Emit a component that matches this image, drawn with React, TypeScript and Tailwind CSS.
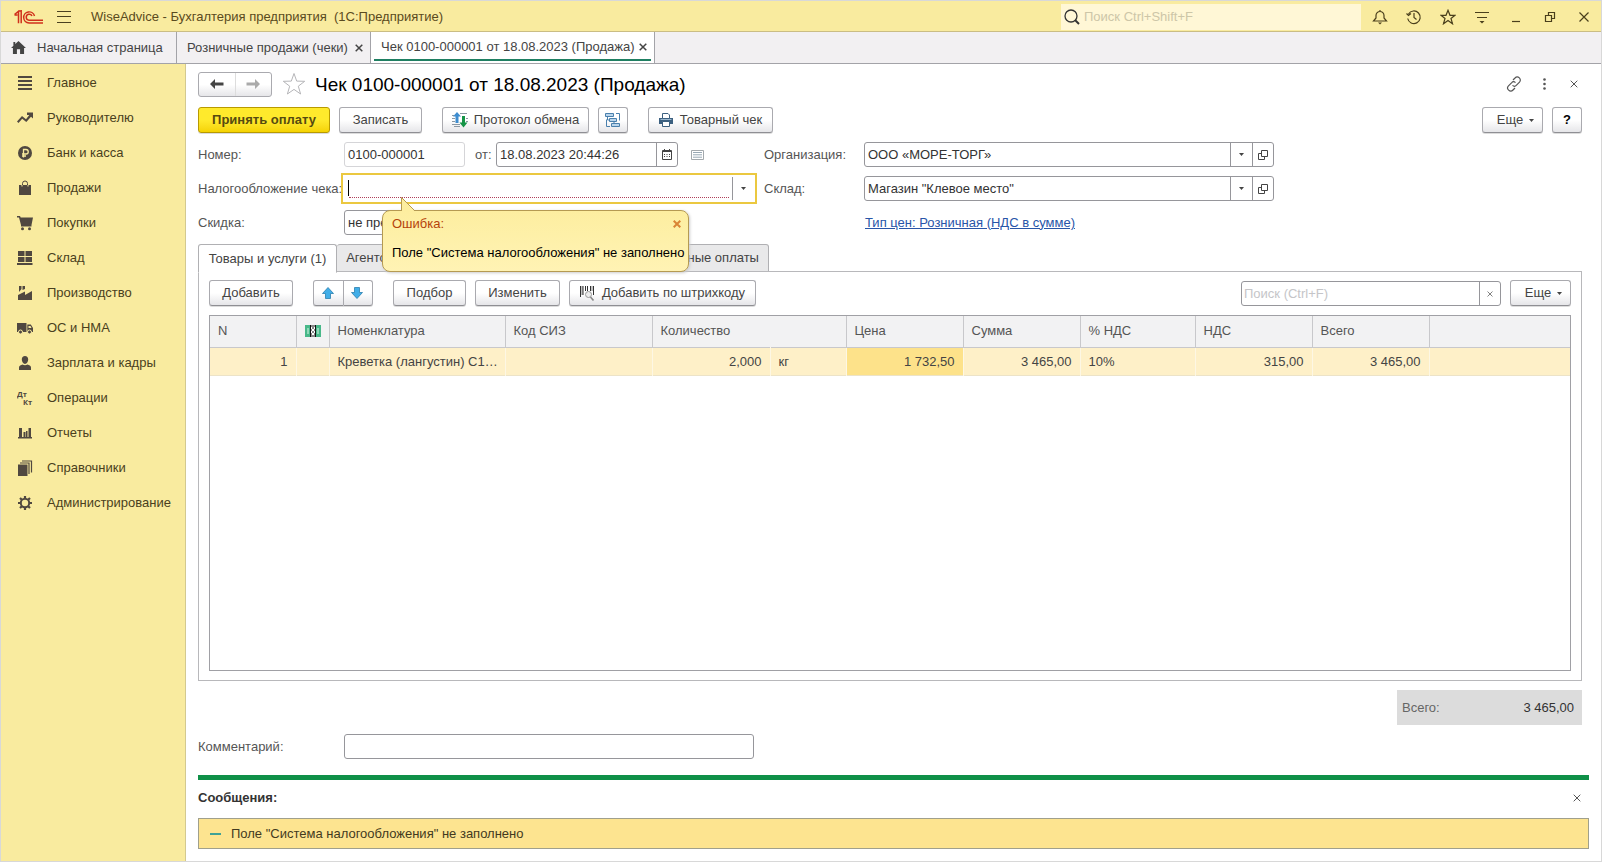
import { useState, type ReactNode } from 'react';
import { clsx } from 'clsx';

const sections: { label: string; icon: ReactNode }[] = [
    { label: 'Главное', icon: <path d="M1 1h14v2H1zM1 5h14v2H1zM1 9h14v2H1zM1 13h14v2H1z" /> },
    {
        label: 'Руководителю',
        icon: <path d="M0 11.5 5 6l4 3.2L12.3 5H10V2.500h6V8.500l-2-1.800L9.300 12 5.200 8.800 1.500 13z" />,
    },
    {
        label: 'Банк и касса',
        icon: (
            <>
                <circle cx="8" cy="8" r="7" />
                <path d="M6.500 12.500v-8H9a2.200 2.200 0 0 1 0 4.500H5M5 11h4" fill="none" stroke="#f9eb9f" strokeWidth="1.300" />
            </>
        ),
    },
    {
        label: 'Продажи',
        icon: (
            <>
                <path d="M2 5h12v10H2z" />
                <path d="M5.500 7V3.500a2.500 2.500 0 0 1 5 0V7" fill="none" stroke="currentColor" />
                <path d="M5 5v1.500M11 5v1.500" stroke="#f9eb9f" />
            </>
        ),
    },
    {
        label: 'Покупки',
        icon: (
            <>
                <path d="M0 1h3l.7 1.500H16L14.500 10H4L2 2.500H0z" />
                <path d="M4 10h10.500v1.500H4z" />
                <circle cx="5.500" cy="13.700" r="1.500" />
                <circle cx="12.500" cy="13.700" r="1.500" />
            </>
        ),
    },
    { label: 'Склад', icon: <path d="M1 1h6.500v5H1zM8.500 1H15v5H8.500zM1 7h6.500v5H1zM8.500 7H15v5H8.500zM0 13h15.500v2H0z" /> },
    {
        label: 'Производство',
        icon: <path d="M1 15V10L8 6.500v3.500L15 6v9zM2 1h2.500v3L2 7zM5.500 1H8v3L5.500 5z" />,
    },
    {
        label: 'ОС и НМА',
        icon: (
            <>
                <path d="M0 3h9.500v9H0zM10.300 4.500h3.500L16 8v4h-5.700z" />
                <path d="M11.500 6h2l1 2h-3z" fill="#f9eb9f" />
                <circle cx="3.500" cy="12" r="2" stroke="#f9eb9f" />
                <circle cx="12.500" cy="12" r="2" stroke="#f9eb9f" />
            </>
        ),
    },
    {
        label: 'Зарплата и кадры',
        icon: <path d="M8 1c2 0 3.200 1.400 3.200 3.500S9.800 9 8 9 4.800 6.600 4.800 4.500 6 1 8 1zM2 15v-2.500C2 10.500 4 10 5.500 9.500c1.500 1 3.500 1 5 0 1.500.5 3.500 1 3.500 3V15z" />,
    },
    {
        label: 'Операции',
        icon: (
            <g fontFamily="Open Sans" fontWeight="700" fontSize="7.500">
                <text x="0" y="7">Дт</text>
                <text x="6" y="15">Кт</text>
            </g>
        ),
    },
    { label: 'Отчеты', icon: <path d="M2 3h3v9H2zM6.500 7h2v5h-2zM9 6h1.500v6H9zM11.500 3h2.500v9h-2.500zM1 12h14v1.500H1z" /> },
    {
        label: 'Справочники',
        icon: (
            <>
                <path d="M1 4.500h9.500V16H1z" />
                <path d="M3 3h9v11M5 1h9.500v11.500" fill="none" stroke="currentColor" strokeWidth="1.200" />
            </>
        ),
    },
    {
        label: 'Администрирование',
        icon: (
            <>
                <circle cx="8" cy="8" r="4.200" fill="none" stroke="currentColor" strokeWidth="2" />
                <path d="M8 1v2.500M8 12.500V15M1 8h2.500M12.500 8H15M3 3l1.800 1.800M11.200 11.200 13 13M3 13l1.800-1.800M11.200 4.800 13 3" stroke="currentColor" strokeWidth="2.200" />
            </>
        ),
    },
];

function Arrow({ className }: { className?: string }) {
    return (
        <svg viewBox="0 0 16 12" className={clsx('w-4 h-3', className)} fill="currentColor">
            <path d="M1 6l5-5v3.500h8.500v3H6V11z" />
        </svg>
    );
}

function Caret() {
    return (
        <svg viewBox="0 0 5 3" className="w-[5px] h-[3px] shrink-0" fill="#444">
            <path d="M0 0h5L2.500 3z" />
        </svg>
    );
}

function OpenIcon() {
    return (
        <svg viewBox="0 0 10 10" className="w-[10px] h-[10px]" fill="none" stroke="#444">
            <path d="M3.500.5h6v6h-6zM3.500 3.500h-3v6h6v-3" />
        </svg>
    );
}

function Cross({ className }: { className?: string }) {
    return (
        <svg viewBox="0 0 8 8" className={clsx('w-2 h-2', className)} fill="none" stroke="currentColor">
            <path d="M.7.7l6.600 6.600M7.300.7L.7 7.300" />
        </svg>
    );
}

function Star({ className }: { className?: string }) {
    return (
        <svg viewBox="0 0 24 24" className={className} fill="none" stroke="currentColor">
            <path d="M12 1.500l2.700 7.600 8 .2-6.400 4.900 2.300 7.800-6.600-4.600L5.400 22l2.300-7.800L1.300 9.300l8-.2z" />
        </svg>
    );
}

function Button({ children, className, ...rest }: React.ComponentProps<'button'>) {
    return (
        <button
            type="button"
            className={clsx(
                'h-[26px] flex items-center justify-center rounded-[3px] border border-[#aaaaaf] border-b-[#8f8f94] bg-linear-to-b from-white from-50% to-[#e6e6e9] text-[#444] shadow-[0_1px_0_#dcdcdc] whitespace-nowrap',
                className,
            )}
            {...rest}
        >
            {children}
        </button>
    );
}

function ReferenceField({ id, label, value }: { id: string; label: string; value: string }) {
    return (
        <div className="flex items-center h-[25px]">
            <label htmlFor={id} className="w-[100px] text-[#555]">{label}</label>
            <div className="w-[410px] h-[25px] flex border border-[#96969b] rounded-[3px] bg-white">
                <input id={id} defaultValue={value} className="flex-1 min-w-0 px-[3px] text-[#333] outline-none" />
                <button type="button" aria-label="Выбрать" className="w-[22px] border-l border-[#96969b] flex items-center justify-center"><Caret /></button>
                <button type="button" aria-label="Открыть" className="w-[21px] border-l border-[#96969b] flex items-center justify-center"><OpenIcon /></button>
            </div>
        </div>
    );
}

const windowActions: { label: string; icon: ReactNode }[] = [
    {
        label: 'Оповещения',
        icon: (
            <>
                <path d="M1.500 12h13L12 9V6.500a4 4 0 0 0-8 0V9zM8 2.500V1" />
                <path d="M6 13.500h4L8 15.500z" fill="currentColor" stroke="none" />
            </>
        ),
    },
    { label: 'История', icon: <path d="M2.500 5a6.300 6.300 0 1 1-.8 4.500M.5 4.500l2 2L5 4.500M8 4v4.500l2.500 2" /> },
    { label: 'Избранное', icon: <path d="M8 1.300l2 5h5l-4 3.200 1.500 5.300L8 11.600l-4.500 3.200L5 9.500 1 6.300h5z" /> },
    {
        label: 'Настройки',
        icon: (
            <>
                <path d="M1 3.500h14M3 8.500h10" />
                <path d="M5.500 12h5L8 14.500z" fill="currentColor" stroke="none" />
            </>
        ),
    },
    { label: 'Свернуть', icon: <path d="M4 12.500h8" /> },
    { label: 'Развернуть', icon: <path d="M3.500 6.500h6v6h-6zM6.500 6V3.500h6v6H10" /> },
    { label: 'Закрыть', icon: <path d="M3.500 3.500l9 9M12.500 3.500l-9 9" /> },
];

function TitleBar() {
    return (
        <header className="h-[31px] pt-px shrink-0 flex items-center bg-[#f9eb9f] border-b border-[#cabd84] text-[#5a4a20]">
            <svg viewBox="0 0 29 14" className="w-[29px] h-[14px] ml-[13px]" fill="none" stroke="#d0301c" strokeWidth="1.500">
                <path d="M.5 4.500 4.500 1.300v12M3.500 5h-3M7.200 13.300V.8L4.500 1.300" />
                <path d="M20.500 6a5.500 5.500 0 1 0-5.500 6.900h14M18 6a3 3 0 1 0-3 4.200h14" />
            </svg>
            <button type="button" aria-label="Меню" className="ml-[14px]">
                <svg viewBox="0 0 14 12" className="w-[14px] h-3" stroke="#4a4020" fill="none">
                    <path d="M0 .5h14M0 5.500h14M0 11.500h14" />
                </svg>
            </button>
            <span className="ml-5 whitespace-pre">WiseAdvice - Бухгалтерия предприятия  (1С:Предприятие)</span>
            <div className="ml-auto w-[300px] h-[26px] flex items-center bg-[#fff7d6]">
                <svg viewBox="0 0 16 16" className="w-4 h-4 ml-[3px] shrink-0" fill="none" stroke="#333" strokeWidth="1.300">
                    <circle cx="7" cy="7" r="6" />
                    <path d="M11 11l4 4" strokeWidth="2" />
                </svg>
                <input aria-label="Поиск" placeholder="Поиск Ctrl+Shift+F" className="flex-1 px-1 outline-none placeholder:text-[#cdc6a8]" />
            </div>
            <div className="flex ml-[2px] text-[#4a3f1c]">
                {windowActions.map(({ label, icon }) => (
                    <button key={label} type="button" aria-label={label} className="w-[34px] h-[29px] flex items-center justify-center">
                        <svg viewBox="0 0 16 16" className="w-4 h-4" fill="none" stroke="currentColor" strokeWidth="1.200">{icon}</svg>
                    </button>
                ))}
            </div>
        </header>
    );
}

function WindowTabs() {
    return (
        <nav className="h-8 shrink-0 flex bg-[#f2f0f2] border-b border-[#a3a3a8] text-[#444]">
            <a href="#home" className="w-[176px] flex items-center border-r border-[#a3a3a8]">
                <svg viewBox="0 0 16 14" className="w-[15px] h-[13px] ml-[10px] mr-[11px]" fill="#444">
                    <path d="M8 0 16 7.500h-2V14H9.700V9H6.300v5H2V7.500H0L2.500 5V1h2v2.200z" />
                </svg>
                Начальная страница
            </a>
            <div className="w-[194px] flex items-center justify-between pl-[10px] pr-[7px] border-r border-[#a3a3a8] whitespace-nowrap">
                <a href="#sales">Розничные продажи (чеки)</a>
                <button type="button" aria-label="Закрыть вкладку"><Cross className="stroke-[1.5]" /></button>
            </div>
            <div className="w-[284px] px-[3px] bg-white border-r border-[#a3a3a8]">
                <div className="h-[29px] pt-[2px] flex items-center justify-between pl-[7px] pr-1 border-b-2 border-[#1f7f62] whitespace-nowrap">
                    <a href="#check">Чек 0100-000001 от 18.08.2023 (Продажа)</a>
                    <button type="button" aria-label="Закрыть вкладку"><Cross className="stroke-[1.5]" /></button>
                </div>
            </div>
        </nav>
    );
}

function Sidebar() {
    return (
        <aside className="w-[185px] pt-px shrink-0 bg-[#f9eb9f] border-r border-[#d3c98f]">
            {sections.map(({ label, icon }) => (
                <a key={label} href="#section" className="h-[35px] flex items-center gap-[14px] pl-4 text-[#4a3f20] whitespace-nowrap">
                    <svg viewBox="0 0 16 16" className="w-4 h-4 text-[#504840]" fill="currentColor">{icon}</svg>
                    {label}
                </a>
            ))}
        </aside>
    );
}

function ErrorPopup({ onClose }: { onClose: () => void }) {
    return (
        <div role="alert" className="absolute z-10 left-[38px] top-[34px] w-[307px] h-[62px] rounded-lg border border-[#b59a52] bg-linear-to-b from-[#fdeea0] to-[#fff3b4] shadow-[1px_1px_3px_#ccc] px-[9px] text-black whitespace-nowrap">
            <svg viewBox="0 0 16 15" className="absolute left-[18px] -top-[14px] w-4 h-[15px]">
                <path d="M.5 15V.500L14 14.500V15z" fill="#fdeea0" />
                <path d="M.5 14V.5L14 14" fill="none" stroke="#b59a52" />
            </svg>
            <div className="flex justify-between items-center h-[26px] text-[#b5430a]">
                Ошибка:
                <button type="button" aria-label="Закрыть" onClick={onClose} className="-mr-[2px] text-[#d98536]"><Cross className="stroke-2" /></button>
            </div>
            <p className="mt-2">Поле "Система налогообложения" не заполнено</p>
        </div>
    );
}

function CheckForm() {
    const [showError, setShowError] = useState(true);

    return (
        <div className="mt-[9px] flex gap-[10px]">
            <div className="flex flex-col gap-[9px]">
                <div className="flex items-center h-[25px]">
                    <label htmlFor="number" className="w-[146px] text-[#555]">Номер:</label>
                    <input id="number" defaultValue="0100-000001" className="w-[121px] h-[25px] px-[3px] border border-[#d5d5d8] rounded-[3px] text-[#333]" />
                    <label htmlFor="date" className="w-[31px] pl-[10px] text-[#555]">от:</label>
                    <div className="w-[182px] h-[25px] flex border border-[#96969b] rounded-[3px]">
                        <input id="date" defaultValue="18.08.2023 20:44:26" className="flex-1 min-w-0 px-[3px] text-[#333] outline-none" />
                        <button type="button" aria-label="Календарь" className="w-[21px] border-l border-[#96969b] flex items-center justify-center">
                            <svg viewBox="0 0 10 11" className="w-[10px] h-[11px]" fill="none" stroke="#444">
                                <path d="M.5 1.500h9v9h-9zM.5 2.500h9M2.500 0v2M7.500 0v2" />
                                <path d="M2 5.500h1M4.500 5.500h1M7 5.500h1M2 7.500h1M4.500 7.500h1M7 7.500h1" />
                            </svg>
                        </button>
                    </div>
                    <svg viewBox="0 0 13 10" className="w-[13px] h-[10px] ml-[13px]" fill="none" stroke="#a3a9ad">
                        <path d="M.5.5h12v9H.5z" />
                        <path d="M2 2.500h9M2 4.800h9M2 7.200h9" stroke="#98a8b4" />
                    </svg>
                </div>

                <div className="flex items-center h-[25px]">
                    <label htmlFor="tax" className="w-[146px] text-[#555] whitespace-nowrap">Налогообложение чека:</label>
                    <div className="relative w-[410px] h-[25px] flex items-center outline-2 outline-offset-1 outline-[#ebc840]">
                        <div className="flex-1 h-[19px] ml-1 mr-[3px] flex items-end">
                            <span className="w-px h-4 mb-[2px] bg-black" />
                            <input id="tax" className="flex-1 h-[19px] border-b border-dotted border-[#b0405a] outline-none" />
                        </div>
                        <button type="button" aria-label="Выбрать" className="w-[22px] h-[23px] border-l border-[#96969b] flex items-center justify-center"><Caret /></button>
                        {showError && <ErrorPopup onClose={() => setShowError(false)} />}
                    </div>
                </div>

                <div className="flex items-center h-[25px]">
                    <label htmlFor="discount" className="w-[146px] text-[#555]">Скидка:</label>
                    <select id="discount" className="w-[150px] h-[25px] px-[3px] appearance-none border border-[#96969b] rounded-[3px] text-[#333]">
                        <option>не предоставлена</option>
                    </select>
                </div>
            </div>

            <div className="flex flex-col gap-[9px]">
                <ReferenceField id="org" label="Организация:" value="ООО «МОРЕ-ТОРГ»" />
                <ReferenceField id="store" label="Склад:" value={'Магазин "Клевое место"'} />
                <div className="pl-[101px] h-[25px] flex items-center">
                    <a href="#prices" className="text-[#2855a8] underline">Тип цен: Розничная (НДС в сумме)</a>
                </div>
            </div>
        </div>
    );
}

function GoodsTable() {
    return (
        <div className="flex-1 mt-[9px] border border-[#a0a0a5] overflow-hidden">
            <table className="w-full table-fixed border-collapse text-[#444] whitespace-nowrap">
                <colgroup>
                    <col className="w-[86px]" />
                    <col className="w-[33px]" />
                    <col className="w-[176px]" />
                    <col className="w-[147px]" />
                    <col className="w-[118px]" />
                    <col className="w-[76px]" />
                    <col className="w-[117px]" />
                    <col className="w-[117px]" />
                    <col className="w-[115px]" />
                    <col className="w-[117px]" />
                    <col className="w-[117px]" />
                    <col />
                </colgroup>
                <thead>
                    <tr className="h-[31px] bg-[#f2f2f3] border-b border-[#c8c8cb] text-left text-[#555] *:font-normal *:px-2 *:border-r *:border-[#c8c8cb]">
                        <th>N</th>
                        <th>
                            <svg viewBox="0 0 16 12" className="w-4 h-3" aria-label="Маркировка">
                                <path d="M0 0h16v12H0z" fill="#48b889" />
                                <path d="M2 3h2v6H2zM12 3h2v6h-2z" fill="#8fd8b8" />
                                <path d="M5 0h6v12H5z" fill="#fff" />
                                <path d="M6 1h4M7 3h2M6 5h1M9 5h1M7 7h2M6 9h1M9 9h1M6 11h4M5.500 0v12M10.500 0v12" stroke="#111" />
                            </svg>
                        </th>
                        <th>Номенклатура</th>
                        <th>Код СИЗ</th>
                        <th colSpan={2}>Количество</th>
                        <th>Цена</th>
                        <th>Сумма</th>
                        <th>% НДС</th>
                        <th>НДС</th>
                        <th>Всего</th>
                        <th className="border-r-0!" />
                    </tr>
                </thead>
                <tbody>
                    <tr className="h-[28px] bg-[#fef0c8] border-b border-[#ece3c8] *:px-2 *:pt-px *:border-r *:border-[#fdf7e4]">
                        <td className="text-right">1</td>
                        <td />
                        <td className="pr-0!">Креветка (лангустин) С1…</td>
                        <td />
                        <td className="text-right">2,000</td>
                        <td>кг</td>
                        <td className="text-right bg-[#fde28a]">1 732,50</td>
                        <td className="text-right">3 465,00</td>
                        <td>10%</td>
                        <td className="text-right">315,00</td>
                        <td className="text-right">3 465,00</td>
                        <td className="border-r-0!" />
                    </tr>
                </tbody>
            </table>
        </div>
    );
}

export default function App() {
    return (
        <div className="min-h-screen flex flex-col border border-[#d8d8d8] bg-white font-['Liberation_Sans',Arial,sans-serif] text-[13px] leading-4">
            <TitleBar />
            <WindowTabs />
            <div className="flex-1 flex">
                <Sidebar />
                <main className="flex-1 min-w-0 flex flex-col px-3 pb-3">
                    <div className="flex-1 flex flex-col pr-[7px]">
                        <div className="mt-2 h-6 flex items-center">
                            <div className="w-[74px] h-[25px] flex rounded-[3px] border border-[#aaaaaf] bg-linear-to-b from-white from-50% to-[#e6e6e9]">
                                <button type="button" aria-label="Назад" className="flex-1 flex items-center justify-center text-[#444]"><Arrow /></button>
                                <button type="button" aria-label="Вперед" className="flex-1 flex items-center justify-center border-l border-[#ddd] text-[#aaa]"><Arrow className="rotate-180" /></button>
                            </div>
                            <button type="button" aria-label="В избранное" className="ml-[10px] text-[#b5b5b8]"><Star className="w-6 h-6" /></button>
                            <h1 className="ml-[9px] pt-px text-[19px] leading-6 text-black">Чек 0100-000001 от 18.08.2023 (Продажа)</h1>
                            <div className="ml-auto flex items-center text-[#555]">
                                <button type="button" aria-label="Ссылка">
                                    <svg viewBox="0 0 16 16" className="w-4 h-4" fill="none" stroke="currentColor" strokeWidth="1.200">
                                        <path d="M7 4l2-2a2.900 2.900 0 0 1 4.500 4.200l-3 3a2.900 2.900 0 0 1-4 .2M9 12l-2 2a2.900 2.900 0 0 1-4.500-4.200l3-3a2.900 2.900 0 0 1 4-.2" />
                                    </svg>
                                </button>
                                <button type="button" aria-label="Действия" className="ml-[21px]">
                                    <svg viewBox="0 0 3 12" className="w-[3px] h-3" fill="currentColor">
                                        <circle cx="1.500" cy="1.500" r="1.300" />
                                        <circle cx="1.500" cy="6" r="1.300" />
                                        <circle cx="1.500" cy="10.500" r="1.300" />
                                    </svg>
                                </button>
                                <button type="button" aria-label="Закрыть" className="ml-6 mr-1"><Cross /></button>
                            </div>
                        </div>

                        <div className="mt-[11px] flex">
                            <Button className="w-[132px] font-bold text-[#564a10]! border-[#b89a00]! from-[#ffea2c]! to-[#f5d300]!">Принять оплату</Button>
                            <Button className="ml-[9px] w-[83px]">Записать</Button>
                            <Button className="ml-5 w-[147px] gap-[6px]">
                                <svg viewBox="0 0 16 16" className="w-4 h-4">
                                    <path d="M0 3.500h2M0 6.500h3M0 9.500h3M0 12.500h8M8 1.500h7M14 6.500h2M14 9.500h2M2 14.500h6" stroke="#8b98a3" />
                                    <path d="M5 0l4 4.500H6.500V11h-3V4.500H1z" fill="#3e8dd0" />
                                    <path d="M11.500 15.500l-4-5H10V4h3v6.500h2.500z" fill="#159447" />
                                </svg>
                                Протокол обмена
                            </Button>
                            <Button className="ml-[9px] w-[30px]" aria-label="Структура подчиненности">
                                <svg viewBox="0 0 16 15" className="w-4 h-[15px]" fill="#b9d5ec" stroke="#4a80ad">
                                    <path d="M.5.5h8v3h-8zM4.500 5.500h7v3h-7zM6.500 10.500h8v3h-8z" />
                                    <path d="M11 .5h3.500v7M1.500 6.500v7H5M2.500 4v3h2M9 9v1.500" fill="none" />
                                </svg>
                            </Button>
                            <Button className="ml-5 w-[125px] gap-[7px]">
                                <svg viewBox="0 0 14 14" className="w-[14px] h-[14px]">
                                    <path d="M0 5h14v6H0z" fill="#3c6080" />
                                    <path d="M3.500.5H9L10.500 2v3.500h-7zM3.500 8.500h7v5h-7z" fill="#fff" stroke="#3c6080" />
                                    <path d="M1.500 6.500h11" stroke="#9bb8cf" />
                                </svg>
                                Товарный чек
                            </Button>
                            <Button className="ml-auto w-[61px] gap-[6px] pl-[6px]">Еще <Caret /></Button>
                            <Button className="ml-[9px] w-[30px] font-bold text-black!">?</Button>
                        </div>

                        <CheckForm />

                        <div role="tablist" className="mt-[9px] h-7 flex text-[#444] *:border *:border-[#b0b0b3] *:border-l-0 *:rounded-t-[3px] *:whitespace-nowrap">
                            <button type="button" role="tab" aria-selected="true" className="relative w-[139px] bg-white border-l! border-b-white! -mb-px">Товары и услуги (1)</button>
                            <button type="button" role="tab" className="w-[122px] bg-[#e9e9ea]">Агентские услуги</button>
                            <button type="button" role="tab" className="w-[162px] bg-[#e9e9ea]">Подарочные сертификаты</button>
                            <button type="button" role="tab" className="w-[148px] bg-[#e9e9ea]">Безналичные оплаты</button>
                        </div>

                        <div className="flex-1 flex flex-col border border-[#b8b8bb] -mt-px px-[10px] pt-2 pb-[9px]">
                            <div className="flex">
                                <Button className="w-[84px]">Добавить</Button>
                                <div className="ml-5 flex">
                                    <Button className="w-[31px] pr-[2px] rounded-r-none" aria-label="Вверх">
                                        <svg viewBox="0 0 12 12" className="w-3 h-3" fill="#41aee8" stroke="#2b7fae" strokeWidth=".8"><path d="M6 .5l5.500 6H8.500v5h-5v-5H.5z" /></svg>
                                    </Button>
                                    <Button className="w-[29px] pr-[2px] border-l-0 rounded-l-none" aria-label="Вниз">
                                        <svg viewBox="0 0 12 12" className="w-3 h-3" fill="#41aee8" stroke="#2b7fae" strokeWidth=".8"><path d="M6 11.500l5.500-6H8.500v-5h-5v5H.5z" /></svg>
                                    </Button>
                                </div>
                                <Button className="ml-5 w-[73px]">Подбор</Button>
                                <Button className="ml-[9px] w-[85px]">Изменить</Button>
                                <Button className="ml-[9px] w-[187px] gap-[7px]">
                                    <svg viewBox="0 0 15 15" className="w-[15px] h-[15px]" fill="none" stroke="#333">
                                        <path d="M.5 0v11M3 0v9M5.500 0v5M7.500 0v5M10.500 0v5M13.500 0v9" />
                                        <path d="M2 0v9M12 0v5" strokeWidth=".6" />
                                        <circle cx="8.500" cy="8.500" r="3" fill="#eee" stroke="#999" />
                                        <path d="M10.500 11l3 3.500" stroke="#888" strokeWidth="1.600" />
                                    </svg>
                                    Добавить по штрихкоду
                                </Button>
                                <div className="ml-auto mt-px w-[260px] h-[25px] flex border border-[#96969b] rounded-[3px]">
                                    <input aria-label="Поиск" placeholder="Поиск (Ctrl+F)" className="flex-1 min-w-0 px-[2px] outline-none placeholder:text-[#c5c5c8]" />
                                    <button type="button" aria-label="Очистить" className="w-[21px] border-l border-[#96969b] flex items-center justify-center text-[#555]"><Cross className="w-[6px]! h-[6px]!" /></button>
                                </div>
                                <Button className="ml-[9px] w-[61px] gap-[6px] pl-[6px]">Еще <Caret /></Button>
                            </div>
                            <GoodsTable />
                        </div>

                        <div className="mt-[9px] ml-auto w-[185px] h-[35px] px-[5px] pr-2 flex items-center justify-between bg-[#dcdcdc] text-[#333]">
                            <span className="text-[#666]">Всего:</span>
                            <span>3 465,00</span>
                        </div>

                        <div className="mt-[9px] flex items-center">
                            <label htmlFor="comment" className="w-[146px] text-[#555]">Комментарий:</label>
                            <input id="comment" className="w-[410px] h-[25px] px-[3px] border border-[#96969b] rounded-[3px]" />
                        </div>
                    </div>

                    <section className="mt-4 border-t-5 border-[#0f9048]">
                        <div className="mt-2 h-5 flex items-center justify-between pr-2">
                            <h2 className="font-bold text-[#333]">Сообщения:</h2>
                            <button type="button" aria-label="Закрыть сообщения" className="text-[#555]"><Cross /></button>
                        </div>
                        <div className="mt-[10px] h-[31px] px-[11px] flex items-center gap-[10px] border border-[#a0a08c] bg-[#fde490] text-[#433a20]">
                            <span className="w-[11px] h-[2px] bg-[#3fa296]" />
                            Поле "Система налогообложения" не заполнено
                        </div>
                    </section>
                </main>
            </div>
        </div>
    );
}
